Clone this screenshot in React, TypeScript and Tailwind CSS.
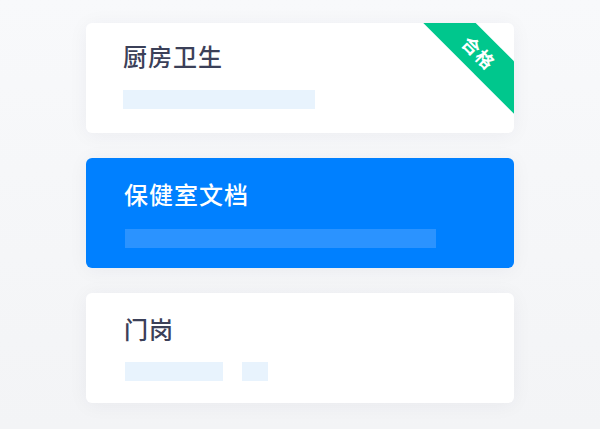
import React from 'react';

const font = { fontFamily: '"Noto Sans CJK SC", "Noto Sans", sans-serif' };

function Bar({ w, color }: { w: string; color: string }) {
    return <div className={`h-[19px] ${w} ${color}`} />;
}

export default function App() {
    return (
        <div className="min-h-[429px] w-[600px] bg-gradient-to-b from-[#f8f9fb] to-[#f3f4f6] pt-[23px]" style={font}>
            <div className="mx-auto flex w-[428px] flex-col gap-[25px]">
                {/* 厨房卫生 */}
                <div className="relative h-[110px] overflow-hidden rounded-[6px] bg-white pl-[37px] pt-[17px] shadow-[0_2px_20px_rgba(30,40,70,0.05)]">
                    <h3 className="text-[24px] font-medium leading-[32px] tracking-[1px] text-[#3b4058]">厨房卫生</h3>
                    <div className="mt-[18px]">
                        <Bar w="w-[192px]" color="bg-[#e8f3fd]" />
                    </div>
                    <div className="absolute right-[-35px] top-[11px] flex h-[37px] w-[140px] rotate-45 items-center justify-center bg-[#00c78d] text-[18px] font-bold tracking-[1px] text-white">
                        合格
                    </div>
                </div>

                {/* 保健室文档 */}
                <div className="h-[110px] rounded-[6px] bg-[#0080ff] pl-[38px] pt-[20px] shadow-[0_2px_20px_rgba(30,40,70,0.05)]">
                    <h3 className="text-[24px] font-medium leading-[32px] tracking-[1px] text-white">保健室文档</h3>
                    <div className="ml-[1px] mt-[19px]">
                        <Bar w="w-[311px]" color="bg-[#2b93ff]" />
                    </div>
                </div>

                {/* 门岗 */}
                <div className="h-[110px] rounded-[6px] bg-white pl-[38px] pt-[20px] shadow-[0_2px_20px_rgba(30,40,70,0.05)]">
                    <h3 className="text-[24px] font-medium leading-[32px] tracking-[1px] text-[#3b4058]">门岗</h3>
                    <div className="ml-[1px] mt-[17px] flex gap-[19px]">
                        <Bar w="w-[98px]" color="bg-[#e8f3fd]" />
                        <Bar w="w-[26px]" color="bg-[#e8f3fd]" />
                    </div>
                </div>
            </div>
        </div>
    );
}
